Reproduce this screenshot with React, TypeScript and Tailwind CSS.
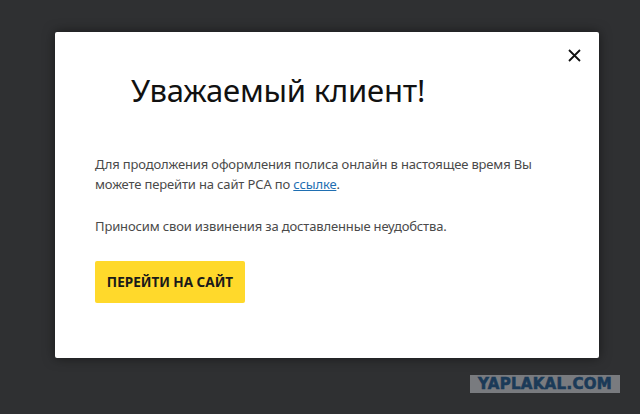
export default function App() {
  return (
    <div className="w-[640px] h-[414px] bg-[#2f3032] relative overflow-hidden" style={{ fontFamily: '"Noto Sans", "Open Sans", sans-serif' }}>
      <div className="pt-[32px] pl-[55px]">
        <div className="relative w-[544px] h-[326px] bg-white rounded-[2px] shadow-[0_0_12px_rgba(0,0,0,0.5)] pt-[38px] pl-[40px]">
          <button className="absolute right-[17px] top-[15px] w-[16px] h-[16px] flex items-center justify-center text-[#111]">
            <svg width="13" height="13" viewBox="0 0 13 13">
              <path d="M1 1L12 12M12 1L1 12" stroke="#111" strokeWidth="1.8" />
            </svg>
          </button>
          <h1 className="ml-[36px] text-[31px] leading-[40px] text-[#111] font-normal tracking-[-0.2px]">Уважаемый клиент!</h1>
          <div className="mt-[44px] text-[13px] leading-[20px] text-[#4a4a4a] w-[450px] tracking-[-0.15px]">
            <p>
              Для продолжения оформления полиса онлайн в настоящее время Вы можете перейти на сайт РСА по{" "}
              <a className="text-[#1f6fb2] underline">ссылке</a>.
            </p>
            <p className="mt-[22px]">Приносим свои извинения за доставленные неудобства.</p>
          </div>
          <button className="mt-[25px] w-[150px] h-[42px] bg-[#ffd92b] rounded-[2px] text-[13.5px] font-bold text-[#1a1a1a]">
            ПЕРЕЙТИ НА САЙТ
          </button>
        </div>
      </div>
      <div className="absolute left-[470px] top-[375px] w-[150px] h-[18px] bg-[#797b7f] flex items-center justify-center">
        <span className="text-[15px] font-black text-[#1b3a58] tracking-[0.3px] leading-none" style={{ fontFamily: '"DejaVu Sans", sans-serif', fontWeight: 900, WebkitTextStroke: "0.6px #1b3a58" }}>YAPLAKAL.COM</span>
      </div>
    </div>
  );
}
